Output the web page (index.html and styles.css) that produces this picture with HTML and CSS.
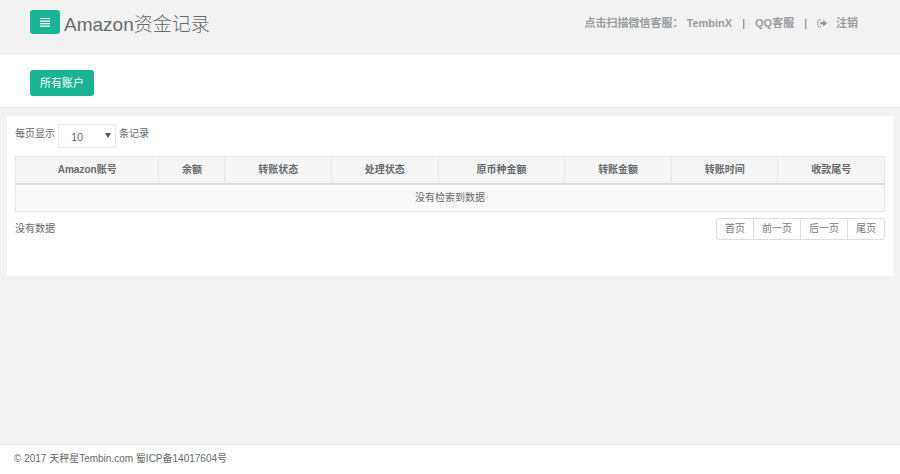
FILE: index.html
```html
<!DOCTYPE html>
<html lang="zh-CN">
<head>
  <meta charset="UTF-8">
  <meta name="viewport" content="width=device-width, initial-scale=1.0">
  <title>Amazon资金记录</title>
  <link rel="stylesheet" href="styles.css">
</head>
<body>
  <div class="wrapper">

    <header class="navbar">
      <div class="navbar-left">
        <button type="button" class="btn btn-menu" aria-label="菜单">
          <svg class="icon-bars" viewBox="0 0 10 10" width="10" height="10" fill="#fff">
            <path d="M0 1h10v1H0zM0 3.5h10v1.2H0zM0 6h10v1.2H0zM0 8.5h10v1.2H0z"/>
          </svg>
        </button>
        <h1 class="title">Amazon资金记录</h1>
      </div>
      <nav class="navbar-links">
        <span>点击扫描微信客服： <a href="#">TembinX</a></span>
        <span class="divider">|</span>
        <a href="#">QQ客服</a>
        <span class="divider">|</span>
        <a href="#" class="logout">
          <svg class="icon-logout" viewBox="0 0 11 9" width="11" height="9">
            <path d="M4 .8H2.2Q.8.8.8 2.2v4.2q0 1.4 1.4 1.4H4" fill="none" stroke="#999c9e" stroke-width="1"/>
            <path d="M3.2 3h3V.8L10.4 4.3 6.2 7.8V5.6h-3z" fill="#999c9e"/>
          </svg>
          注销
        </a>
      </nav>
    </header>

    <div class="account-bar">
      <button type="button" class="btn btn-account">所有账户</button>
    </div>

    <main class="content">
      <div class="panel">
        <div class="length">
          <label for="pageSize">每页显示</label>
          <div class="select-box">
            <select id="pageSize">
              <option>10</option>
              <option>25</option>
              <option>50</option>
              <option>100</option>
            </select>
          </div>
          <span>条记录</span>
        </div>

        <table class="records">
          <thead>
            <tr>
              <th class="col-account">Amazon账号</th>
              <th class="col-balance">余额</th>
              <th>转账状态</th>
              <th>处理状态</th>
              <th class="col-origin">原币种金额</th>
              <th>转账金额</th>
              <th>转账时间</th>
              <th>收款尾号</th>
            </tr>
          </thead>
          <tbody>
            <tr>
              <td colspan="8">没有检索到数据</td>
            </tr>
          </tbody>
        </table>

        <div class="table-foot">
          <div class="info">没有数据</div>
          <ul class="pagination">
            <li><a href="#">首页</a></li>
            <li><a href="#">前一页</a></li>
            <li><a href="#">后一页</a></li>
            <li><a href="#">尾页</a></li>
          </ul>
        </div>
      </div>
    </main>

    <footer class="footer">© 2017 天秤星Tembin.com 蜀ICP备14017604号</footer>

  </div>
</body>
</html>
```
FILE: styles.css
```css
* {
  box-sizing: border-box;
}

body {
  margin: 0;
  background-color: #f2f2f2;
  color: #676a6c;
  font-family: "Liberation Sans", "Noto Sans CJK SC", sans-serif;
  font-size: 10px;
  line-height: 16px;
}

a {
  color: inherit;
  text-decoration: none;
}

.wrapper {
  display: flex;
  flex-direction: column;
  min-height: 100vh;
}

.navbar {
  display: flex;
  justify-content: space-between;
  align-items: flex-start;
  padding: 10px 42px 13px 30px;
  border-bottom: 1px solid #e7eaec;
}

.navbar-left {
  display: flex;
  align-items: flex-start;
  gap: 4px;
}

.btn {
  border: 0;
  border-radius: 3px;
  background-color: #1ab394;
  color: #fff;
  font-family: inherit;
  font-size: 11px;
  cursor: pointer;
}

.btn-menu {
  display: flex;
  justify-content: center;
  align-items: center;
  width: 30px;
  height: 24px;
  padding: 0;
}

.title {
  margin: 0;
  font-size: 19px;
  font-weight: 300;
  line-height: 30px;
}

.navbar-links {
  display: flex;
  gap: 10px;
  padding-top: 5px;
  color: #999c9e;
  font-size: 11px;
  font-weight: 600;
}

.divider {
  color: #676a6c;
  font-weight: 400;
}

.logout {
  display: flex;
  align-items: center;
  gap: 8px;
}

.account-bar {
  padding: 16px 30px 11px;
  border-bottom: 1px solid #e7eaec;
  background-color: #fff;
}

.btn-account {
  display: block;
  padding: 5px 10px;
  line-height: 16px;
}

.content {
  flex: 1;
  padding: 8px 7px;
}

.panel {
  padding: 8px 8px 36px;
  background-color: #fff;
}

.length {
  display: flex;
  gap: 3px;
  margin-bottom: 8px;
  line-height: 20px;
}

.select-box {
  position: relative;
}

/* small arrow at the right of the select */
.select-box::after {
  content: "";
  position: absolute;
  top: 9px;
  right: 5px;
  border: 3px solid transparent;
  border-top: 5px solid #555;
  border-bottom: 0;
  pointer-events: none;
}

.select-box select {
  display: block;
  width: 58px;
  height: 24px;
  padding: 1px 12px 0;
  border: 1px solid #e5e6e7;
  border-radius: 1px;
  background-color: #fff;
  color: inherit;
  font-family: inherit;
  font-size: 11px;
  appearance: none;
}

.records {
  width: 100%;
  table-layout: fixed;
  border-collapse: collapse;
  text-align: center;
}

.records th,
.records td {
  padding: 5px;
  border: 1px solid #e7e7e7;
}

.records th {
  border-bottom: 2px solid #ddd;
  background-color: #f5f5f6;
}

.records td {
  background-color: #f9f9f9;
}

.col-account {
  width: 16.5%;
}

.col-balance {
  width: 7.6%;
}

.col-origin {
  width: 14.6%;
}

.table-foot {
  display: flex;
  justify-content: space-between;
  align-items: center;
  margin-top: 6px;
}

.pagination {
  display: flex;
  margin: 0;
  padding: 0;
  border: 1px solid #ddd;
  border-radius: 3px;
  color: #777;
  list-style: none;
}

.pagination a {
  display: block;
  padding: 2px 8px;
}

.pagination li + li {
  border-left: 1px solid #ddd;
}

.footer {
  padding: 6px 14px 7px;
  border-top: 1px solid #e7eaec;
  background-color: #fff;
}
```
